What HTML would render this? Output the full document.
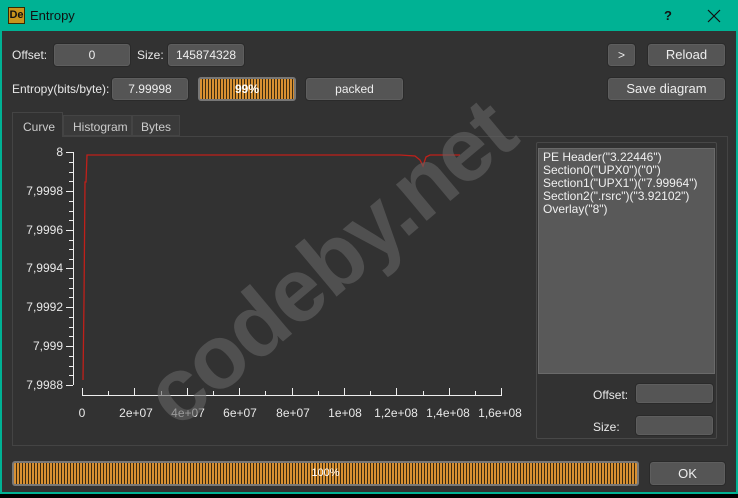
<!DOCTYPE html>
<html><head><style>
*{margin:0;padding:0;box-sizing:border-box}
body{width:738px;height:498px;background:#000;font-family:"Liberation Sans",sans-serif;font-size:12px;color:#e8e8e8;position:relative;overflow:hidden}
#win{position:absolute;left:0;top:0;width:738px;height:494px;background:#00b294}
#client{position:absolute;left:2px;top:31px;width:734px;height:461px;background:#323232}
.a{position:absolute}
.btn{position:absolute;background:#555;border:1px solid #2a2a2a;border-radius:4px;text-align:center;color:#eee;box-shadow:inset 0 0 0 1px #5e5e5e}
.lbl{position:absolute;color:#e8e8e8}
.yl{position:absolute;right:675px;width:60px;text-align:right;font-size:12px}
.xl{position:absolute;top:406px;font-size:12px;transform:translateX(-50%)}
.stripes{background:repeating-linear-gradient(90deg,#d89032 0,#d89032 2px,#3a2a10 2px,#3a2a10 3px)}
</style></head><body>
<div id="win">
 <div class="a" style="left:8px;top:7px;width:17px;height:17px;background:#c8951d;border:1px solid #3a2a00;font:bold 11px 'Liberation Sans';color:#111;line-height:15px;text-align:center">De</div>
 <div class="a" style="left:30px;top:8px;font-size:13px;color:#111">Entropy</div>
 <div class="a" style="left:664px;top:8px;font-size:13px;font-weight:bold;color:#111">?</div>
 <svg class="a" style="left:707px;top:9px" width="14" height="14"><path d="M1 1L13 13M13 1L1 13" stroke="#111" stroke-width="1.2"/></svg>
</div>
<div id="client"></div>
<div class="lbl" style="left:12px;top:48px">Offset:</div>
<div class="btn" style="left:53px;top:43px;width:78px;height:24px;line-height:22px">0</div>
<div class="lbl" style="left:137px;top:48px">Size:</div>
<div class="btn" style="left:167px;top:43px;width:78px;height:24px;line-height:22px">145874328</div>
<div class="btn" style="left:607px;top:43px;width:29px;height:24px;line-height:22px">&gt;</div>
<div class="btn" style="left:647px;top:43px;width:79px;height:24px;line-height:22px;font-size:13px">Reload</div>
<div class="lbl" style="left:12px;top:82px">Entropy(bits/byte):</div>
<div class="btn" style="left:111px;top:77px;width:78px;height:24px;line-height:22px">7.99998</div>
<div class="a stripes" style="left:198px;top:77px;width:98px;height:24px;border:2px solid #777;border-radius:3px;text-align:center;line-height:20px;font-weight:bold;color:#fff">99%</div>
<div class="btn" style="left:305px;top:77px;width:99px;height:24px;line-height:22px">packed</div>
<div class="btn" style="left:607px;top:77px;width:119px;height:24px;line-height:22px;font-size:13px">Save diagram</div>
<div class="a" style="left:12px;top:136px;width:716px;height:310px;border:1px solid #444"></div>
<div class="a" style="left:12px;top:112px;width:51px;height:25px;border:1px solid #444;border-bottom:none;background:#323232;padding:7px 0 0 10px;color:#ccc">Curve</div>
<div class="a" style="left:63px;top:115px;width:69px;height:21px;border:1px solid #444;background:#3a3a3a;padding:4px 0 0 9px;color:#ccc">Histogram</div>
<div class="a" style="left:132px;top:115px;width:48px;height:21px;border:1px solid #444;background:#3a3a3a;padding:4px 0 0 8px;color:#ccc">Bytes</div>
<svg class="a" style="left:0;top:0" width="738" height="498">
 <g stroke="#eee" stroke-width="1" fill="none">
  <line x1="73.5" y1="152" x2="73.5" y2="385"/>
  <line x1="82" y1="395.5" x2="502" y2="395.5"/>
 </g>
 <g stroke="#eee" stroke-width="1">
  <line x1="66" y1="152.5" x2="73" y2="152.5"/><line x1="66" y1="191.5" x2="73" y2="191.5"/><line x1="66" y1="230.5" x2="73" y2="230.5"/><line x1="66" y1="268.5" x2="73" y2="268.5"/><line x1="66" y1="307.5" x2="73" y2="307.5"/><line x1="66" y1="346.5" x2="73" y2="346.5"/><line x1="66" y1="385.5" x2="73" y2="385.5"/>
  <line x1="69" y1="162.5" x2="73" y2="162.5"/><line x1="69" y1="172.5" x2="73" y2="172.5"/><line x1="69" y1="181.5" x2="73" y2="181.5"/>
  <line x1="69" y1="201.5" x2="73" y2="201.5"/><line x1="69" y1="211.5" x2="73" y2="211.5"/><line x1="69" y1="220.5" x2="73" y2="220.5"/>
  <line x1="69" y1="240.5" x2="73" y2="240.5"/><line x1="69" y1="249.5" x2="73" y2="249.5"/><line x1="69" y1="259.5" x2="73" y2="259.5"/>
  <line x1="69" y1="278.5" x2="73" y2="278.5"/><line x1="69" y1="288.5" x2="73" y2="288.5"/><line x1="69" y1="297.5" x2="73" y2="297.5"/>
  <line x1="69" y1="317.5" x2="73" y2="317.5"/><line x1="69" y1="327.5" x2="73" y2="327.5"/><line x1="69" y1="336.5" x2="73" y2="336.5"/>
  <line x1="69" y1="356.5" x2="73" y2="356.5"/><line x1="69" y1="366.5" x2="73" y2="366.5"/><line x1="69" y1="375.5" x2="73" y2="375.5"/>
  <line x1="82.5" y1="388" x2="82.5" y2="395"/><line x1="134.5" y1="388" x2="134.5" y2="395"/><line x1="187.5" y1="388" x2="187.5" y2="395"/><line x1="239.5" y1="388" x2="239.5" y2="395"/><line x1="292.5" y1="388" x2="292.5" y2="395"/><line x1="344.5" y1="388" x2="344.5" y2="395"/><line x1="396.5" y1="388" x2="396.5" y2="395"/><line x1="449.5" y1="388" x2="449.5" y2="395"/><line x1="501.5" y1="388" x2="501.5" y2="395"/>
  <line x1="108.5" y1="391" x2="108.5" y2="395"/><line x1="161.5" y1="391" x2="161.5" y2="395"/><line x1="213.5" y1="391" x2="213.5" y2="395"/><line x1="265.5" y1="391" x2="265.5" y2="395"/><line x1="318.5" y1="391" x2="318.5" y2="395"/><line x1="370.5" y1="391" x2="370.5" y2="395"/><line x1="423.5" y1="391" x2="423.5" y2="395"/><line x1="475.5" y1="391" x2="475.5" y2="395"/>
 </g>
 <polyline fill="none" stroke="#c0201a" stroke-width="1.3" points="83,380 84,300 85,182 86,182 87,155 200,155 300,155 400,155 415,156 420,160 423,166 426,157 430,155 460,155"/>
</svg>
<div class="yl" style="top:145px">8</div>
<div class="yl" style="top:184px">7,9998</div>
<div class="yl" style="top:223px">7,9996</div>
<div class="yl" style="top:261px">7,9994</div>
<div class="yl" style="top:300px">7,9992</div>
<div class="yl" style="top:339px">7,999</div>
<div class="yl" style="top:378px">7,9988</div>
<div class="xl" style="left:82px">0</div>
<div class="xl" style="left:136px">2e+07</div>
<div class="xl" style="left:188px">4e+07</div>
<div class="xl" style="left:240px">6e+07</div>
<div class="xl" style="left:293px">8e+07</div>
<div class="xl" style="left:345px">1e+08</div>
<div class="xl" style="left:396px">1,2e+08</div>
<div class="xl" style="left:448px">1,4e+08</div>
<div class="xl" style="left:500px">1,6e+08</div>
<div class="a" style="left:536px;top:142px;width:181px;height:297px;border:1px solid #484848;border-radius:2px"></div>
<div class="a" style="left:538px;top:148px;width:177px;height:226px;background:#595959;border:1px solid #6a6a6a;padding:2px 4px;line-height:13px;color:#f0f0f0">PE Header("3.22446")<br>Section0("UPX0")("0")<br>Section1("UPX1")("7.99964")<br>Section2(".rsrc")("3.92102")<br>Overlay("8")</div>
<div class="lbl" style="left:593px;top:388px">Offset:</div>
<div class="btn" style="left:635px;top:383px;width:79px;height:21px"></div>
<div class="lbl" style="left:593px;top:420px">Size:</div>
<div class="btn" style="left:635px;top:415px;width:79px;height:21px"></div>
<div class="a" style="left:80px;top:212px;width:500px;text-align:center;font:bold 90px 'Liberation Sans',sans-serif;color:rgba(100,100,100,0.6);transform:rotate(-40deg);transform-origin:center;letter-spacing:-2px">codeby.net</div>
<div class="a stripes" style="left:12px;top:461px;width:627px;height:25px;border:2px solid #777;border-radius:3px;text-align:center;line-height:21px;color:#fff;font-size:11px">100%</div>
<div class="btn" style="left:649px;top:461px;width:77px;height:25px;line-height:23px;font-size:13px">OK</div>
</body></html>
